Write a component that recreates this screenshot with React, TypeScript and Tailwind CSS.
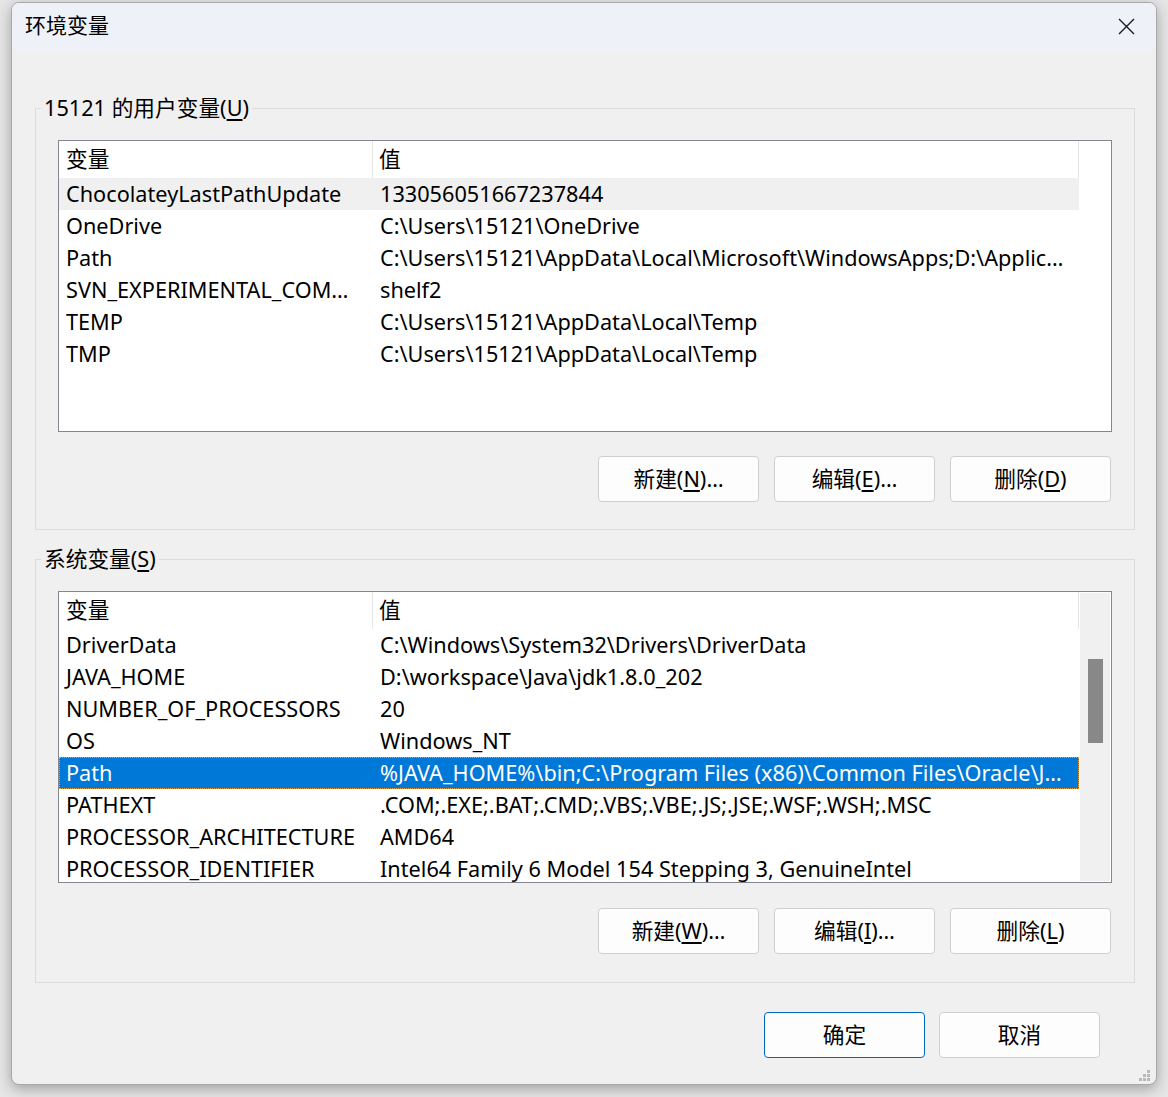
import React from 'react';

type Row = { name: string; value: string; state?: 'hover' | 'selected' };

const userVars: Row[] = [
  { name: 'ChocolateyLastPathUpdate', value: '133056051667237844', state: 'hover' },
  { name: 'OneDrive', value: 'C:\\Users\\15121\\OneDrive' },
  { name: 'Path', value: 'C:\\Users\\15121\\AppData\\Local\\Microsoft\\WindowsApps;D:\\Applic…' },
  { name: 'SVN_EXPERIMENTAL_COM…', value: 'shelf2' },
  { name: 'TEMP', value: 'C:\\Users\\15121\\AppData\\Local\\Temp' },
  { name: 'TMP', value: 'C:\\Users\\15121\\AppData\\Local\\Temp' },
];

const systemVars: Row[] = [
  { name: 'DriverData', value: 'C:\\Windows\\System32\\Drivers\\DriverData' },
  { name: 'JAVA_HOME', value: 'D:\\workspace\\Java\\jdk1.8.0_202' },
  { name: 'NUMBER_OF_PROCESSORS', value: '20' },
  { name: 'OS', value: 'Windows_NT' },
  { name: 'Path', value: '%JAVA_HOME%\\bin;C:\\Program Files (x86)\\Common Files\\Oracle\\J…', state: 'selected' },
  { name: 'PATHEXT', value: '.COM;.EXE;.BAT;.CMD;.VBS;.VBE;.JS;.JSE;.WSF;.WSH;.MSC' },
  { name: 'PROCESSOR_ARCHITECTURE', value: 'AMD64' },
  { name: 'PROCESSOR_IDENTIFIER', value: 'Intel64 Family 6 Model 154 Stepping 3, GenuineIntel' },
];

function Mn({ label, k, tail = '' }: { label: string; k: string; tail?: string }) {
  return (
    <>
      {label}(<u className="underline-offset-[3px]">{k}</u>){tail}
    </>
  );
}

function Btn({ children, primary }: { children: React.ReactNode; primary?: boolean }) {
  return (
    <div
      className={`w-[161px] h-[46px] flex items-center justify-center rounded-[4px] bg-[#fdfdfd] border ${
        primary ? 'border-[#0067c0]' : 'border-[#cfcfcf]'
      }`}
    >
      {children}
    </div>
  );
}

function VarList({ rows, scrollbar }: { rows: Row[]; scrollbar?: boolean }) {
  return (
    <div className="h-[292px] border border-[#828790] bg-white flex overflow-hidden">
      <div className="flex-1 min-w-0">
        <div className="flex h-[37px] items-center w-[1020px]">
          <div className="w-[314px] h-full pl-[7px] flex items-center border-r border-[#e5e5e5]">变量</div>
          <div className="w-[706px] h-full pl-[6px] flex items-center border-r border-[#e5e5e5]">值</div>
        </div>
        {rows.map((r) => (
          <div
            key={r.name + r.value}
            className={`flex h-[32px] items-center w-[1020px] whitespace-nowrap ${
              r.state === 'hover' ? 'bg-[#f0f0f0]' : ''
            } ${r.state === 'selected' ? 'bg-[#0078d7] text-white outline outline-1 outline-dotted outline-offset-[-1px] outline-[#e8a040]' : ''}`}
          >
            <div className="w-[314px] pl-[7px] overflow-hidden">{r.name}</div>
            <div className="w-[706px] pl-[7px] overflow-hidden">{r.value}</div>
          </div>
        ))}
      </div>
      {scrollbar && (
        <div className="w-[30px] my-[1px] mr-[1px] bg-[#f0f0f0] pt-[66px] flex justify-center">
          <div className="w-[15px] h-[84px] bg-[#888888]" />
        </div>
      )}
    </div>
  );
}

function Group({
  legend,
  rows,
  buttons,
  scrollbar,
  className = '',
  btnGap = 'mt-[24px]',
}: {
  legend: React.ReactNode;
  rows: Row[];
  buttons: React.ReactNode[];
  scrollbar?: boolean;
  className?: string;
  btnGap?: string;
}) {
  return (
    <fieldset className={`border border-[#dcdcdc] mx-[23px] mr-[21px] ${className}`}>
      <legend className="ml-[5px] px-[3px] leading-[28px]">{legend}</legend>
      <div className="px-[22px] pt-[18px]">
        <VarList rows={rows} scrollbar={scrollbar} />
        <div className={`flex justify-end gap-[15px] mr-[1px] ${btnGap}`}>
          {buttons.map((b, i) => (
            <Btn key={i}>{b}</Btn>
          ))}
        </div>
      </div>
    </fieldset>
  );
}

export default function App() {
  return (
    <div className="w-[1168px] h-[1097px] bg-[#e6e6e6] pt-[2px] pl-[11px] overflow-hidden font-['Noto_Sans','Noto_Sans_CJK_SC',sans-serif] text-[21.7px] text-black">
      <div className="relative w-[1146px] h-[1083px] bg-[#f0f0f0] border border-[#a9a9a9] rounded-[8px] overflow-hidden shadow-[0_4px_14px_rgba(0,0,0,0.3)]">
        {/* title bar */}
        <div className="h-[49px] bg-[#eff1f8] flex items-center justify-between pl-[13px] pr-[21px] pb-[3px]">
          <span className="text-[21px]">环境变量</span>
          <svg width="17" height="17" viewBox="0 0 17 17">
            <path d="M1 1L16 16M16 1L1 16" stroke="#1a1a1a" strokeWidth="1.4" />
          </svg>
        </div>

        <Group
          className="mt-[42px] pb-[27px]"
          legend={<Mn label="15121 的用户变量" k="U" />}
          rows={userVars}
          buttons={[
            <Mn label="新建" k="N" tail="…" />,
            <Mn label="编辑" k="E" tail="…" />,
            <Mn label="删除" k="D" />,
          ]}
        />

        <Group
          className="mt-[15px] pb-[28px]"
          btnGap="mt-[25px]"
          legend={<Mn label="系统变量" k="S" />}
          rows={systemVars}
          scrollbar
          buttons={[
            <Mn label="新建" k="W" tail="…" />,
            <Mn label="编辑" k="I" tail="…" />,
            <Mn label="删除" k="L" />,
          ]}
        />

        <div className="flex justify-end gap-[14px] mt-[29px] mr-[56px]">
          <Btn primary>确定</Btn>
          <Btn>取消</Btn>
        </div>

        {/* resize grip */}
        <svg className="absolute right-[6px] bottom-[3px]" width="11" height="11" viewBox="0 0 11 11">
          <g fill="#b8b8b8">
            <rect x="8" y="0" width="3" height="3" />
            <rect x="4" y="4" width="3" height="3" />
            <rect x="8" y="4" width="3" height="3" />
            <rect x="0" y="8" width="3" height="3" />
            <rect x="4" y="8" width="3" height="3" />
            <rect x="8" y="8" width="3" height="3" />
          </g>
        </svg>
      </div>
    </div>
  );
}
